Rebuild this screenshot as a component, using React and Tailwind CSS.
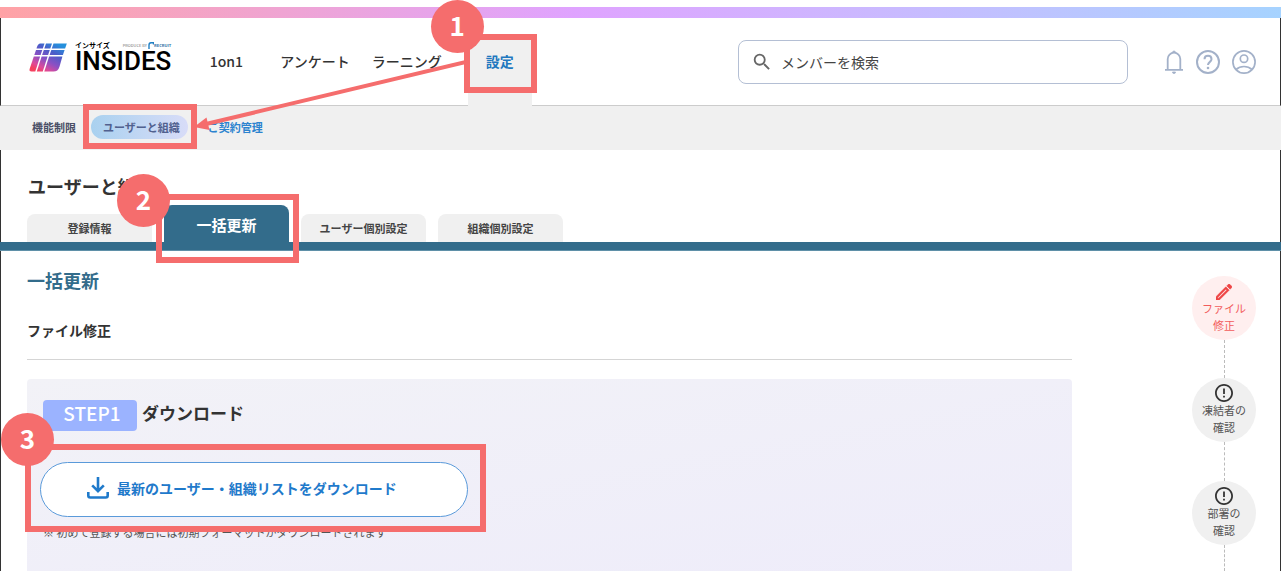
import { MdErrorOutline, MdOutlineEdit, MdSearch } from "react-icons/md";

function LogoMark() {
  return (
    <svg viewBox="0 0 38 29" className="h-[29px] w-[38px]" aria-hidden="true">
      <defs>
        <linearGradient id="mark" x1="27" y1="0" x2="11" y2="29" gradientUnits="userSpaceOnUse">
          <stop offset="0" stopColor="#2590dc" />
          <stop offset="0.3" stopColor="#4a5cc8" />
          <stop offset="0.6" stopColor="#8a50c4" />
          <stop offset="0.85" stopColor="#dd4a9a" />
          <stop offset="1" stopColor="#f5405f" />
        </linearGradient>
      </defs>
      <g fill="url(#mark)">
        <path d="M11 .5h4.500l-1.700 5H7.500Q8.500 1 11 .5z" />
        <path d="M17 .5h6l-1.700 5h-6z" />
        <path d="M24.500 .5h13.300l-1.700 5H22.800z" />
        <path d="M7 7h6.300l-1.700 5H5.300z" />
        <path d="M14.800 7h6l-1.700 5h-6z" />
        <path d="M22.300 7h13.300l-1.700 5H20.600z" />
        <path d="M4.800 13.500h6.300L6.300 28.500H2.500Q0 28.500.6 26z" />
        <path d="M12.600 13.500h6l-4.800 15h-6z" />
        <path d="M20.100 13.500h13.300l-3 10.500Q29 28.500 24.500 28.500H15.300z" />
      </g>
    </svg>
  );
}

function Logo() {
  return (
    <a href="#home" className="flex items-center gap-2 pb-[9px]" aria-label="INSIDES">
      <LogoMark />
      <span className="flex flex-col">
        <span className="flex h-2 items-center justify-between">
          <span className="text-[7px] leading-[8px] font-bold text-black">インサイズ</span>
          <span className="flex items-center text-[4px] leading-[8px]">
            <span className="text-[#777]">PRODUCE BY</span>
            <svg viewBox="0 0 6 7" className="ml-px h-[7px] w-[6px]" fill="none" stroke="#1f7fc4" strokeWidth="1.400" aria-hidden="true">
              <path d="M1 7V3Q1 .8 3 .8h2.500v1.700" />
            </svg>
            <span className="font-bold text-[#2f6fa5]">RECRUIT</span>
          </span>
        </span>
        <span className="font-[Roboto,sans-serif] text-[26px] leading-6 font-medium text-black">INSIDES</span>
      </span>
    </a>
  );
}

function BellIcon() {
  return (
    <svg viewBox="0 0 20 24" className="h-6 w-5" fill="none" stroke="currentColor" strokeWidth="1.800" aria-hidden="true">
      <path d="M1 19.800h18M3.700 20V9a6.300 6.300 0 0 1 12.600 0V20" />
      <path d="M8.500 2.500a1.500 1.500 0 0 1 3 0zM8.500 22a1.500 1.500 0 0 0 3 0z" fill="currentColor" strokeWidth=".8" />
    </svg>
  );
}

function HelpIcon() {
  return (
    <svg viewBox="0 0 24 24" className="size-6" fill="none" stroke="currentColor" strokeWidth="2" aria-hidden="true">
      <circle cx="12" cy="12" r="11" />
      <path d="M8.500 9.300c0-4.600 7-4.600 7 0 0 2.500-3.500 2.700-3.500 5.700" />
      <circle cx="12" cy="18" r="1.300" fill="currentColor" stroke="none" />
    </svg>
  );
}

function AccountIcon() {
  return (
    <svg viewBox="0 0 24 24" className="size-6" fill="none" stroke="currentColor" strokeWidth="1.700" aria-hidden="true">
      <circle cx="12" cy="12" r="11.100" />
      <circle cx="12" cy="8.700" r="3.700" />
      <path d="M4 19.500c4.500-4 11.500-4 16 0" />
    </svg>
  );
}

function DownloadIcon() {
  return (
    <svg viewBox="0 0 22 22" className="size-[22px]" fill="none" stroke="currentColor" strokeWidth="2.600" aria-hidden="true">
      <path d="M11 0v13M5.200 8.300l5.800 5.800 5.800-5.800" />
      <path d="M1.300 15v3.500q0 2 2 2h15.400q2 0 2-2V15" />
    </svg>
  );
}

function Badge({ className, children }) {
  return (
    <span
      className={`absolute z-20 flex size-[53px] items-center justify-center rounded-full bg-[#f56d6d] pb-1 text-[26px] leading-none font-bold text-white ${className}`}
    >
      {children}
    </span>
  );
}

function Frame({ className }) {
  return <span aria-hidden="true" className={`pointer-events-none absolute z-10 border-6 border-[#f56d6d] ${className}`} />;
}

function Header() {
  return (
    <header className="flex h-[88px] items-center border-x border-b border-x-[#333] border-b-[#ccc] pr-6 pl-7">
      <Logo />
      <nav className="ml-3 flex items-center self-stretch pb-px text-sm font-medium">
        <a href="#1on1" className="min-w-[86px] text-center">1on1</a>
        <a href="#survey" className="px-[11px]">アンケート</a>
        <a href="#learning" className="px-[11px]">ラーニング</a>
        <span className="relative -mb-[2px] ml-[15px] flex w-16 self-stretch pt-[22px]">
          <a href="#settings" className="flex flex-1 justify-center bg-[#f0f0f0] pt-[11px] font-bold text-[#1f78bf]">設定</a>
          <Frame className="top-4 -right-[5px] -left-1 h-[59px]" />
          <Badge className="-top-[18px] -left-[37px]">1</Badge>
          <svg viewBox="0 0 274 76" className="absolute top-[39px] right-[66px] z-10 h-[76px] w-[274px]" aria-hidden="true">
            <path d="M274 5L14 67" stroke="#f56d6d" strokeWidth="4" />
            <path d="M2 70L14.500 60.500L17.500 73z" fill="#f56d6d" />
          </svg>
        </span>
      </nav>
      <div className="flex flex-1 items-center justify-end gap-9">
        <label className="flex h-11 w-full max-w-[390px] items-center gap-2 rounded-lg border border-[#b4bfd4] pl-3">
          <MdSearch className="size-[22px] text-[#666]" aria-hidden="true" />
          <input
            type="search"
            aria-label="メンバーを検索"
            placeholder="メンバーを検索"
            className="min-w-0 flex-1 bg-transparent text-sm outline-none placeholder:text-[#444]"
          />
        </label>
        <div className="flex items-center gap-3 text-[#a3b1c9]">
          <button type="button" aria-label="通知"><BellIcon /></button>
          <button type="button" aria-label="ヘルプ"><HelpIcon /></button>
          <button type="button" aria-label="アカウント"><AccountIcon /></button>
        </div>
      </div>
    </header>
  );
}

function SubNav() {
  return (
    <nav className="flex h-11 items-center bg-[#f0f0f0] pb-[2px] pl-8 text-[11px] font-bold">
      <a href="#limits" className="text-[#4a4f66]">機能制限</a>
      <span className="relative ml-[15px]">
        <a href="#users" className="flex h-6 items-center rounded-full bg-linear-to-r from-[#a9d1ef] to-[#d8dcf8] pr-2 pl-3 text-[#51618f]">
          ユーザーと組織
        </a>
        <Frame className="-top-[11px] -right-[9px] -left-2 h-[45px]" />
      </span>
      <a href="#contract" className="ml-5 text-[#2b83cf]">ご契約管理</a>
    </nav>
  );
}

const tabClass = "flex h-7 w-[125px] items-center justify-center rounded-t-lg bg-[#f0f0f0] text-[11px] font-bold text-[#444]";

function Tabs() {
  return (
    <div className="flex items-end gap-3 pl-[26px]" role="tablist">
      <button type="button" role="tab" aria-selected="false" className={tabClass}>登録情報</button>
      <span className="relative">
        <button
          type="button"
          role="tab"
          aria-selected="true"
          className="flex h-[37px] w-[125px] items-center justify-center rounded-t-lg bg-[#336c8b] pt-1 text-[15px] font-bold text-white"
        >
          一括更新
        </button>
        <Frame className="-top-[11px] -right-[10px] -left-2 h-[69px]" />
        <Badge className="-top-[31px] -left-[47px]">2</Badge>
      </span>
      <button type="button" role="tab" aria-selected="false" className={tabClass}>ユーザー個別設定</button>
      <button type="button" role="tab" aria-selected="false" className={tabClass}>組織個別設定</button>
    </div>
  );
}

function Step({ icon, lines, active }) {
  return (
    <li
      className={`flex size-16 flex-col items-center rounded-full text-[11px] leading-[17px] ${
        active ? "bg-[#ffefef] text-[#f25c5c]" : "bg-[#f0f0f0] text-[#555]"
      }`}
    >
      <span className="flex h-6 items-end">{icon}</span>
      {lines.map((line) => (
        <span key={line}>{line}</span>
      ))}
    </li>
  );
}

function Connector({ className }) {
  return <li aria-hidden="true" className={`border-l border-dashed border-[#bbb] ${className}`} />;
}

function AlertIcon() {
  return <MdErrorOutline viewBox="2 2 20 20" className="size-[18px] text-[#333]" aria-hidden="true" />;
}

export default function App() {
  return (
    <div className="flex min-h-screen flex-col overflow-x-hidden bg-white pt-[7px] font-['Noto_Sans_CJK_JP',sans-serif] text-[#333]">
      <div className="h-[11px] bg-linear-to-r from-[#ffa2a5] via-[#dfa3ff] via-45% to-[#a6d3ff]" />
      <Header />
      <SubNav />
      <div className="border-x border-[#333]">
        <h1 className="pt-6 pb-[6px] pl-[27px] text-lg leading-[25px] font-bold">ユーザーと組織</h1>
        <Tabs />
      </div>
      <div className="h-[9px] border-b border-[#5f90a8] bg-[#336c8b]" />
      <div className="flex flex-1 border-x border-[#333] pr-6 pl-[26px]">
        <main className="mr-[120px] flex flex-1 flex-col">
          <h2 className="mt-[15px] text-lg leading-7 font-bold text-[#336c8b]">一括更新</h2>
          <h3 className="mt-6 border-b border-[#d5d5d5] pb-[17px] text-sm leading-6 font-bold">ファイル修正</h3>
          <section className="mt-[19px] flex-1 rounded-t bg-linear-to-br from-[#f2f2f7] to-[#eeecfa] px-4 pt-[21px]">
            <h4 className="flex items-start gap-[5px] text-[17px] leading-[26px] font-bold">
              <span className="flex h-[31px] w-[94px] justify-center rounded-sm bg-[#9bb3ff] pl-1 text-[19px] font-medium text-white">
                STEP1
              </span>
              ダウンロード
            </h4>
            <div className="relative -ml-[3px] mt-[31px] w-[428px]">
              <button
                type="button"
                className="flex h-[55px] w-full items-center gap-2 rounded-full border border-[#5a9ada] bg-white pb-1 pl-[46px] text-sm font-bold text-[#1f7acb]"
              >
                <DownloadIcon />
                最新のユーザー・組織リストをダウンロード
              </button>
              <Frame className="-top-[18px] -right-[18px] -left-[15px] h-[88px]" />
              <Badge className="-top-[49px] -left-[39px]">3</Badge>
            </div>
            <p className="mt-[7px] text-[11px] leading-4 text-[#555]">
              ※ 初めて登録する場合には初期フォーマットがダウンロードされます
            </p>
          </section>
        </main>
        <ol className="flex w-16 flex-col items-center pt-[25px]">
          <Step
            active
            icon={<MdOutlineEdit viewBox="3 3 18 18" strokeWidth=".6" className="size-4 text-[#ee4444]" aria-hidden="true" />}
            lines={["ファイル", "修正"]}
          />
          <Connector className="h-[38px]" />
          <Step icon={<AlertIcon />} lines={["凍結者の", "確認"]} />
          <Connector className="h-[39px]" />
          <Step icon={<AlertIcon />} lines={["部署の", "確認"]} />
          <Connector className="flex-1" />
        </ol>
      </div>
    </div>
  );
}
